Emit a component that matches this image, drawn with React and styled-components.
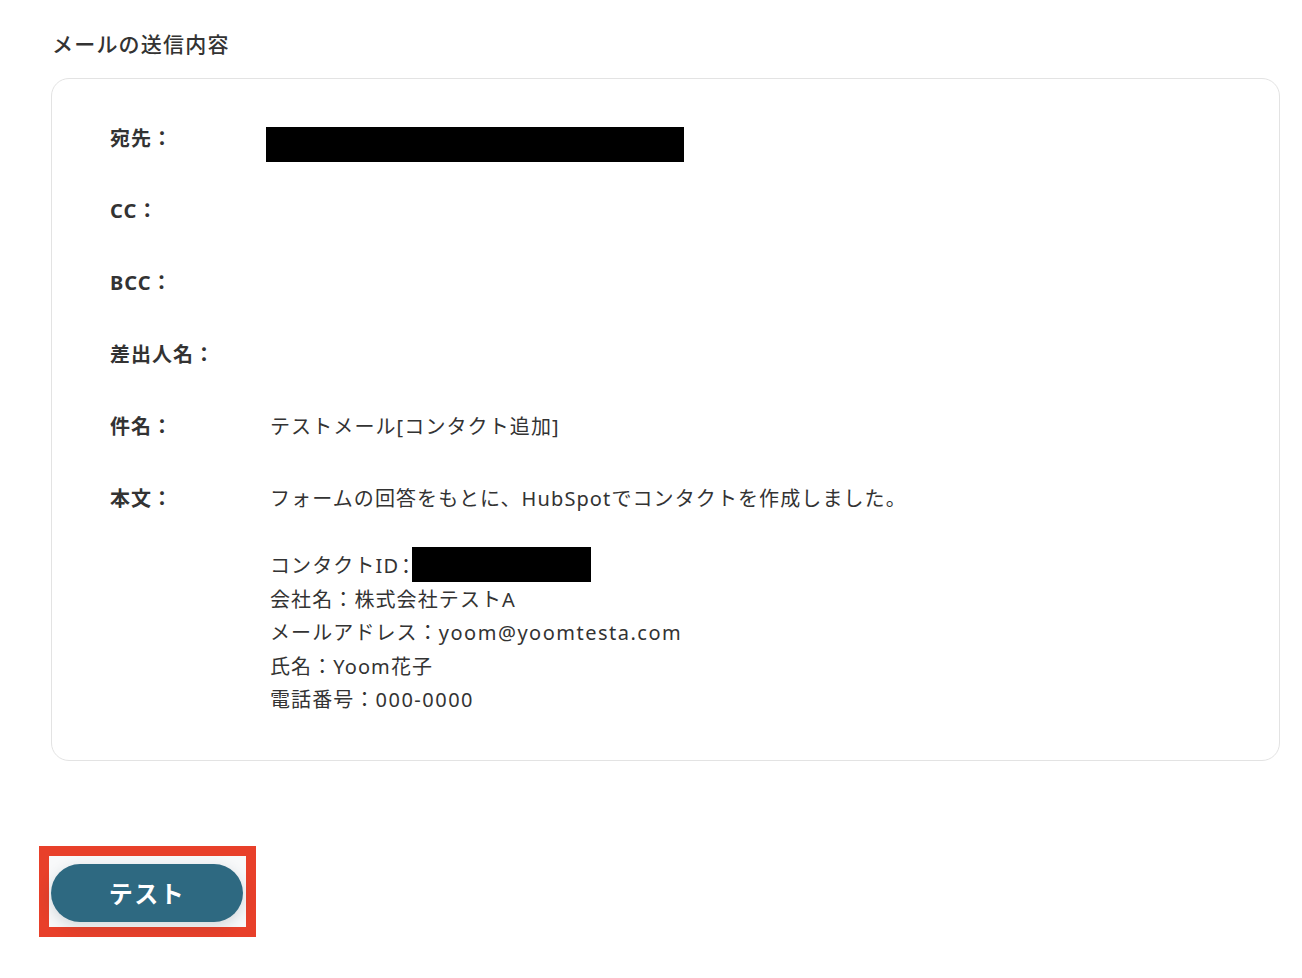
import React from "react";
import styled, { createGlobalStyle } from "styled-components";

const GlobalStyle = createGlobalStyle`
  body {
    margin: 0;
    background: #fff;
    font-family: "Noto Sans", "Noto Sans CJK JP", sans-serif;
    color: #333;
  }
`;

const Page = styled.div`
  padding: 29px 22px 40px 51px;
`;

const Title = styled.h2`
  margin: 0 0 19px 1px;
  font-size: 21px;
  font-weight: 500;
  line-height: 30px;
  letter-spacing: 1.2px;
  color: #333;
`;

const Card = styled.div`
  border: 1px solid #e3e3e3;
  border-radius: 18px;
  padding: 43px 58px 43.5px;
  display: flex;
  flex-direction: column;
  gap: 38.5px;
`;

const Row = styled.div`
  display: grid;
  grid-template-columns: 160px 1fr;
  align-items: start;
  min-height: 33.5px;
  font-size: 20px;
  line-height: 33.5px;
`;

const Label = styled.div`
  font-weight: 700;
  color: #333;
  letter-spacing: 1px;
`;

const Value = styled.div`
  color: #333;
  letter-spacing: 1.1px;
`;

const Line = styled.div`
  display: flex;
  align-items: center;
  height: 33.5px;
  white-space: nowrap;
`;

const Latin = styled.span`
  letter-spacing: 1.5px;
`;

const Colon = styled.span`
  font-family: "Noto Sans CJK JP", sans-serif;
  font-feature-settings: "halt";
  margin-left: 2px;
`;

const Redacted = styled.span`
  display: ${(p) => (p.$block ? "block" : "inline-block")};
  background: #000;
  width: ${(p) => p.$w}px;
  height: 35px;
  margin-left: ${(p) => p.$ml || 0}px;
  margin-top: ${(p) => p.$mt || 0}px;
  margin-bottom: ${(p) => p.$mb || 0}px;
`;

const Footer = styled.div`
  margin-top: 85px;
  margin-left: -12px;
`;

const Highlight = styled.div`
  display: inline-block;
  border: 10px solid #e8402a;
  padding: 8px 3px 5px 2px;
  background: #f8f9fa;
`;

const Button = styled.button`
  display: block;
  width: 192px;
  height: 58px;
  border: none;
  border-radius: 29px;
  background: #2e6981;
  color: #fff;
  font-family: "Noto Sans CJK JP", sans-serif;
  font-size: 24px;
  font-weight: 700;
  letter-spacing: 1.5px;
  padding-bottom: 2px;
  box-shadow: 0 4px 14px rgba(40, 60, 80, 0.18);
  cursor: pointer;
`;

export default function App() {
  return (
    <>
      <GlobalStyle />
      <Page>
        <Title>メールの送信内容</Title>
        <Card>
          <Row>
            <Label>宛先：</Label>
            <Value>
              <Redacted $block $w={418} $ml={-4} $mt={5} $mb={-6.5} />
            </Value>
          </Row>
          <Row>
            <Label>CC：</Label>
            <Value />
          </Row>
          <Row>
            <Label>BCC：</Label>
            <Value />
          </Row>
          <Row>
            <Label>差出人名：</Label>
            <Value />
          </Row>
          <Row>
            <Label>件名：</Label>
            <Value>テストメール[コンタクト追加]</Value>
          </Row>
          <Row>
            <Label>本文：</Label>
            <Value>
              <Line>フォームの回答をもとに、HubSpotでコンタクトを作成しました。</Line>
              <Line />
              <Line>
                コンタクトID<Colon>：</Colon>
                <Redacted $w={179} $mt={-2} />
              </Line>
              <Line>会社名：株式会社テストA</Line>
              <Line>
                メールアドレス：<Latin>yoom@yoomtesta.com</Latin>
              </Line>
              <Line>氏名：Yoom花子</Line>
              <Line>
                電話番号：<Latin>000-0000</Latin>
              </Line>
            </Value>
          </Row>
        </Card>
        <Footer>
          <Highlight>
            <Button>テスト</Button>
          </Highlight>
        </Footer>
      </Page>
    </>
  );
}
